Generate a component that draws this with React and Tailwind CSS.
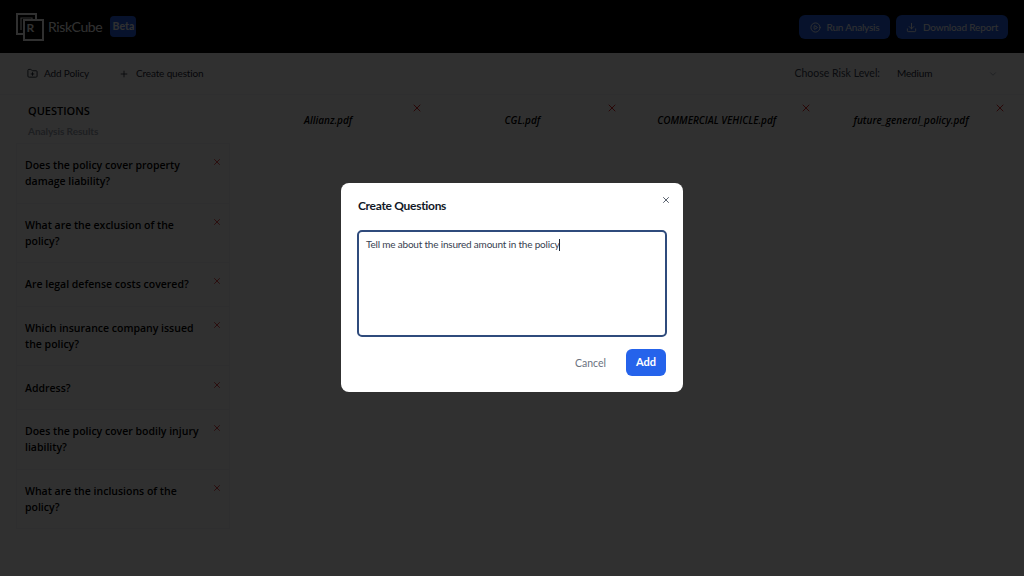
import React from "react";
import { CirclePlay, Download, FolderPlus, Plus, X, ChevronDown } from "lucide-react";

const FILES = ["Allianz.pdf", "CGL.pdf", "COMMERCIAL VEHICLE.pdf", "future_general_policy.pdf"];

const QUESTIONS = [
  "Does the policy cover property damage liability?",
  "What are the exclusion of the policy?",
  "Are legal defense costs covered?",
  "Which insurance company issued the policy?",
  "Address?",
  "Does the policy cover bodily injury liability?",
  "What are the inclusions of the policy?",
];

function Logo() {
  return (
    <svg width="28" height="28" viewBox="0 0 28 28" fill="none" stroke="#fff" strokeWidth="2">
      <path d="M8 21H1V1h19v6" />
      <rect x="8" y="7" width="19" height="20" />
      <path d="M5 17V5h11v2" strokeWidth="1.2" />
      <text x="10.5" y="19" fontSize="12" fontWeight="700" fill="#fff" stroke="none" fontFamily="Lato, sans-serif">R</text>
    </svg>
  );
}

function Header() {
  return (
    <header className="h-[53px] bg-black flex items-center justify-between px-4">
      <div className="flex items-center">
        <Logo />
        <span className="ml-[4px] text-[14px] tracking-[-0.35px] text-white">RiskCube</span>
        <span className="ml-2 w-[26px] h-[21px] flex items-center justify-center rounded-[4px] bg-[#2563eb] text-white text-[10.5px] font-bold">Beta</span>
      </div>
      <div className="flex items-center gap-[6px] pt-px">
        <button className="h-6 w-[91px] flex items-center justify-center gap-[6px] rounded-md bg-[#2563eb] text-white text-[10px] tracking-[-0.2px]">
          <CirclePlay size={11} /> Run Analysis
        </button>
        <button className="h-6 w-[112px] flex items-center justify-center gap-[6px] rounded-md bg-[#2563eb] text-white text-[10px] tracking-[-0.15px]">
          <Download size={11} /> Download Report
        </button>
      </div>
    </header>
  );
}

function Toolbar() {
  return (
    <div className="h-[42px] flex items-center justify-between pl-[27px] pr-[18px] border-b border-gray-100 text-[#1f2937]">
      <div className="flex items-center text-[10px] tracking-[-0.15px]">
        <button className="flex items-center gap-[6px]">
          <FolderPlus size={11} /> Add Policy
        </button>
        <button className="ml-[30px] flex items-center gap-[7px]">
          <Plus size={10} /> Create question
        </button>
      </div>
      <div className="flex items-center">
        <span className="text-[10.5px] text-[#374151]">Choose Risk Level:</span>
        <div className="ml-[6px] w-[120px] flex items-center justify-between pl-[11px] pr-2 text-[10px] tracking-[-0.15px] text-[#1f2937]">
          Medium <ChevronDown size={10} className="text-gray-400" />
        </div>
      </div>
    </div>
  );
}

function Sidebar() {
  return (
    <aside className="w-[231px] pl-4 shrink-0">
      <div className="pl-3 pt-2 h-[48px]">
        <div className="text-[11px] leading-[16px] font-semibold text-black font-['Open_Sans']">QUESTIONS</div>
        <div className="mt-1 text-[10px] tracking-[-0.05px] leading-[16px] font-bold text-[#9ca3af]">Analysis Results</div>
      </div>
      <div className="w-[214px]">
        {QUESTIONS.map((q) => (
          <div key={q} className="flex items-start justify-between pl-2 pr-[7px] py-[13.3px] border border-gray-100 border-t-0 first:border-t">
            <div className="w-[183px] text-[10.5px] leading-[16px] font-semibold text-black font-['Open_Sans']">{q}</div>
            <X size={10} className="text-[#dc2626]" />
          </div>
        ))}
      </div>
    </aside>
  );
}

function PolicyHeaders() {
  return (
    <div className="flex-1 flex">
      {FILES.map((f) => (
        <div key={f} className="w-[194.3px] h-[48px] relative flex justify-center pt-[17px]">
          <span className="text-[10px] leading-[16px] italic font-semibold text-black font-['Open_Sans']">{f}</span>
          <X size={12} className="absolute top-[7px] right-[2px] text-[#dc2626]" />
        </div>
      ))}
    </div>
  );
}

function CreateQuestionsDialog() {
  return (
    <div className="fixed inset-0 bg-black/[0.81] flex items-center justify-center">
      <div className="w-[342px] h-[209px] bg-white rounded-lg pl-[16px] pr-4 pt-[14px] relative -translate-y-px">
        <X size={10} className="absolute top-3 right-3 text-[#374151]" />
        <h2 className="pl-px text-[12px] tracking-[-0.3px] leading-[18px] font-bold text-[#111827]">Create Questions</h2>
        <div className="mt-[15px] h-[107px] rounded-[5px] border-2 border-[#2f4b7c] pl-[7px] py-[4px] text-[10px] tracking-[-0.2px] leading-[16px] text-[#374151]">
          Tell me about the insured amount in the policy<span className="inline-block w-px h-3 bg-[#1f2937] align-middle" />
        </div>
        <div className="mt-[12px] pr-px flex items-center justify-end gap-[20px]">
          <button className="pt-[3px] text-[10.5px] text-[#6b7280]">Cancel</button>
          <button className="w-10 h-[27px] rounded-md bg-[#2563eb] text-white text-[11px] font-bold">Add</button>
        </div>
      </div>
    </div>
  );
}

export default function App() {
  return (
    <div className="relative w-[1024px] h-[576px] overflow-hidden bg-white font-['Lato',sans-serif]">
      <Header />
      <Toolbar />
      <div className="flex">
        <Sidebar />
        <PolicyHeaders />
      </div>
      <CreateQuestionsDialog />
    </div>
  );
}
